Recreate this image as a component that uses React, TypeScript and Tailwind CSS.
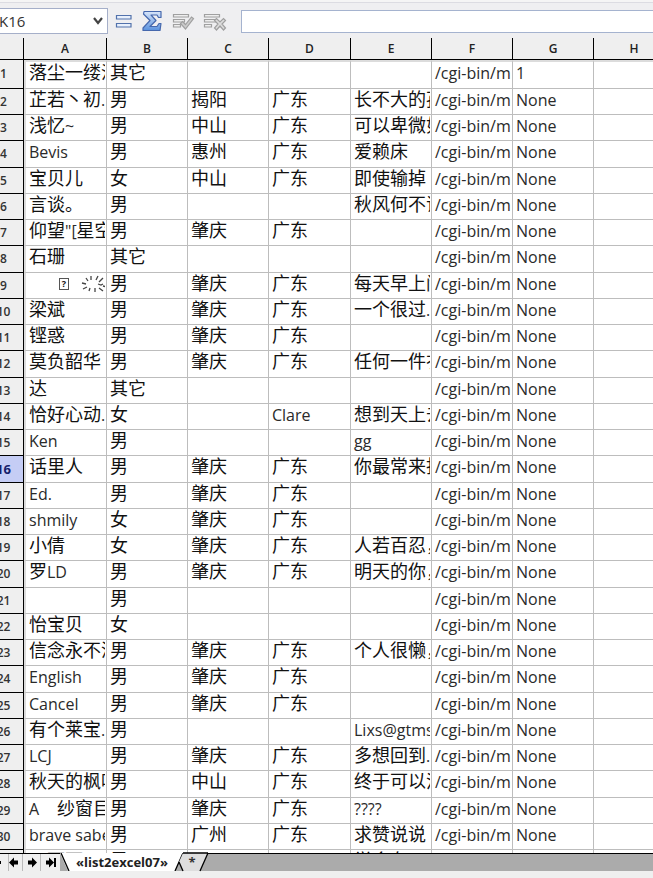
import { Fragment } from 'react'

interface Row {
  name: string
  gender?: string
  city?: string
  province?: string
  sign?: string
  avatar?: string
  flag?: string
}

const AVATAR = '/cgi-bin/m'

const columns = ['A', 'B', 'C', 'D', 'E', 'F', 'G', 'H']

const contacts: Row[] = [
  { name: '落尘一缕沙', gender: '其它', flag: '1' },
  { name: '芷若丶初.', gender: '男', city: '揭阳', province: '广东', sign: '长不大的孩' },
  { name: '浅忆~', gender: '男', city: '中山', province: '广东', sign: '可以卑微如' },
  { name: 'Bevis', gender: '男', city: '惠州', province: '广东', sign: '爱赖床' },
  { name: '宝贝儿', gender: '女', city: '中山', province: '广东', sign: '即使输掉' },
  { name: '言谈。', gender: '男', sign: '秋风何不识' },
  { name: '仰望"[星空', gender: '男', city: '肇庆', province: '广东' },
  { name: '石珊', gender: '其它' },
  { name: 'symbols', gender: '男', city: '肇庆', province: '广东', sign: '每天早上闹' },
  { name: '梁斌', gender: '男', city: '肇庆', province: '广东', sign: '一个很过.' },
  { name: '铿惑', gender: '男', city: '肇庆', province: '广东' },
  { name: '莫负韶华', gender: '男', city: '肇庆', province: '广东', sign: '任何一件衣' },
  { name: '达', gender: '其它' },
  { name: '恰好心动.', gender: '女', province: 'Clare', sign: '想到天上去' },
  { name: 'Ken', gender: '男', sign: 'gg' },
  { name: '话里人', gender: '男', city: '肇庆', province: '广东', sign: '你最常来找' },
  { name: 'Ed.', gender: '男', city: '肇庆', province: '广东' },
  { name: 'shmily', gender: '女', city: '肇庆', province: '广东' },
  { name: '小倩', gender: '女', city: '肇庆', province: '广东', sign: '人若百忍，' },
  { name: '罗LD', gender: '男', city: '肇庆', province: '广东', sign: '明天的你，' },
  { name: '', gender: '男' },
  { name: '怡宝贝', gender: '女' },
  { name: '信念永不消', gender: '男', city: '肇庆', province: '广东', sign: '个人很懒，' },
  { name: 'English', gender: '男', city: '肇庆', province: '广东' },
  { name: 'Cancel', gender: '男', city: '肇庆', province: '广东' },
  { name: '有个莱宝.', gender: '男', sign: 'Lixs@gtms' },
  { name: 'LCJ', gender: '男', city: '肇庆', province: '广东', sign: '多想回到.' },
  { name: '秋天的枫叶', gender: '男', city: '中山', province: '广东', sign: '终于可以沉' },
  { name: 'A\u3000纱窗目', gender: '男', city: '肇庆', province: '广东', sign: '????' },
  { name: 'brave saber', gender: '男', city: '广州', province: '广东', sign: '求赞说说' },
  { name: '\u3000可可', gender: '男', sign: '学会在' },
]

const selectedRow = 16

// latin runs are set smaller than the chinese ones
function CellText({ text }: { text: string }) {
  const parts = text.split(/([\x20-\x7e]+)/)
  return (
    <>
      {parts.map((part, i) =>
        i % 2 ? (
          <span key={i} className="text-base/[20px] text-[#2a2a2a]">
            {part}
          </span>
        ) : (
          <Fragment key={i}>{part}</Fragment>
        )
      )}
    </>
  )
}

function SymbolName() {
  return (
    <span className="flex h-[22px] items-center gap-3 pl-[30px]">
      <span className="flex h-3 w-[10px] shrink-0 items-center justify-center border border-[#555] text-[9px] font-bold">?</span>
      <svg className="h-5 w-[26px] shrink-0" viewBox="0 0 26 20" fill="none" stroke="#444" strokeWidth="1.3">
        <path d="M1 9l4 1M2 15l4-2M5 4l2 3M10 2v4M8 17l1-3M14 18v-4M15 6l2-4M18 8l4-4M17 10l3 1 2-1M18 14l4 3M22 12l4 1" />
      </svg>
    </span>
  )
}

function Toolbar() {
  return (
    <div className="flex h-[38px] shrink-0 items-start border-t-2 border-[#f5f5f5] bg-[#efeff1]">
      <div className="flex w-full items-start border-t border-[#dcdce2] pt-[5px]">
        <div className="relative h-[26px] w-[124px] shrink-0">
          <input
            aria-label="Name Box"
            defaultValue="K16"
            className="h-full w-full border border-[#a5afc9] bg-white pl-[14px] text-[15px] text-[#333] outline-none"
          />
          <button aria-label="Open name list" className="absolute right-[2px] top-1 flex size-4 items-center justify-center">
            <svg viewBox="0 0 16 16" className="size-4" fill="none" stroke="#444" strokeWidth="2.2">
              <path d="M4 6l4 5 4-5" />
            </svg>
          </button>
        </div>
        <button aria-label="Function" className="ml-[6px] mt-[3px]">
          <svg width="20" height="20" viewBox="0 0 20 20" fill="#e8f0fc" stroke="#5272ac" strokeWidth="1.2">
            <path d="M2.500 4.500h14.500v3.500h-14.500zM2.500 12.500h14.500v3.500h-14.500z" />
          </svg>
        </button>
        <button aria-label="Sum" className="ml-[7px] mt-[2px]">
          <svg width="24" height="22" viewBox="0 0 24 22">
            <defs>
              <linearGradient id="sum" x1="0" y1="0" x2="0" y2="1">
                <stop offset="0" stopColor="#d8e6fa" />
                <stop offset="1" stopColor="#5a92de" />
              </linearGradient>
            </defs>
            <path
              d="M3 1.500h17v6h-2.500l-1.500-2.500h-6l5 5.500-6 6h7l2-3h2l-1 7h-17v-2.500l7-7.500-6.500-6.500z"
              fill="url(#sum)"
              stroke="#4668ad"
              strokeWidth="1.2"
              strokeLinejoin="round"
            />
          </svg>
        </button>
        <button aria-label="Accept" className="ml-[7px] mt-[4px]">
          <svg width="24" height="20" viewBox="0 0 24 20" fill="#eee" stroke="#a0a0a0" strokeWidth="1.200">
            <path d="M1.500 2.500h15v2.500h-15zM1.500 7.500h11v2.500h-11zM1.500 12.500h7v2.500h-7z" />
            <path d="M8.500 11.500l2-2 3 3 6-7.500 2 1.500-8 10.500z" fill="#ccc" />
          </svg>
        </button>
        <button aria-label="Cancel" className="ml-[7px] mt-[4px]">
          <svg width="24" height="20" viewBox="0 0 24 20" fill="#eee" stroke="#a0a0a0" strokeWidth="1.200">
            <path d="M1.500 2.500h15v2.500h-15zM1.500 7.500h11v2.500h-11zM1.500 12.500h7v2.500h-7z" />
            <path d="M11.500 8.500l2-2 3.500 3.500 3.500-3.500 2 2-3.500 3.500 3.500 4-2 2-3.500-4-3.500 4-2-2 3.500-4z" fill="#ddd" />
          </svg>
        </button>
        <input
          aria-label="Input line"
          className="ml-[14px] mt-[2px] h-[23px] min-w-0 flex-1 border border-r-0 border-[#a5b3cf] bg-white px-1 outline-none"
        />
      </div>
    </div>
  )
}

function Sheet() {
  return (
    <div className="min-h-0 flex-1 overflow-hidden bg-white">
      <table className="w-full min-w-[691px] table-fixed border-separate border-spacing-0">
        <colgroup>
          <col className="w-[40px]" />
          <col className="w-[83px]" />
          <col className="w-[81px]" />
          <col className="w-[81px]" />
          <col className="w-[82px]" />
          <col className="w-[81px]" />
          <col className="w-[81px]" />
          <col className="w-[81px]" />
          <col />
        </colgroup>
        <thead>
          <tr className="h-[22px] bg-[#efefef] text-xs/[20px] text-[#222]">
            <th className="border-b border-r border-black" />
            {columns.map(c => (
              <th key={c} scope="col" className="border-b border-r border-black p-0 font-semibold">
                {c}
              </th>
            ))}
          </tr>
        </thead>
        <tbody>
          {contacts.map((row, i) => {
            const n = i + 1
            const cells = [row.name, row.gender, row.city, row.province, row.sign, row.avatar ?? AVATAR, row.flag ?? 'None']
            return (
              <tr key={n} className="group h-[26px] first:h-[29px] nth-[4n]:h-[27px]">
                <th
                  scope="row"
                  className={
                    n === selectedRow
                      ? 'border-b border-r border-black bg-[#c5cdf5] p-0 text-[13px]/[22px] font-bold text-[#16206a]'
                      : 'border-b border-r border-black bg-[#efefef] p-0 text-xs/[22px] font-semibold text-[#333]'
                  }
                >
                  {n}
                </th>
                {columns.map((c, j) => (
                  <td
                    key={c}
                    className="border-b border-r border-[#bdbdbd] p-0 align-top first-of-type:border-l-2 first-of-type:border-l-[#dcdcdc] group-first:border-t-2 group-first:border-t-[#dcdcdc]"
                  >
                    <div className="mr-px h-[25px] overflow-hidden whitespace-nowrap pl-[3px] text-lg/[20px] text-[#111]">
                      {row.name === 'symbols' && j === 0 ? <SymbolName /> : <CellText text={cells[j] ?? ''} />}
                    </div>
                  </td>
                ))}
              </tr>
            )
          })}
        </tbody>
      </table>
    </div>
  )
}

function SheetTabs() {
  return (
    <div className="h-[25px] shrink-0 bg-[#efefef]">
      <div className="flex h-[18px] bg-[#ababab]">
        <div className="flex border-t border-black bg-[#efefef]">
          <button aria-label="First sheet" className="w-[25px] border-r border-[#bbb]">
            <svg width="17" height="17" viewBox="0 0 17 17" className="block">
              <path d="M2 4h2v9H2zM5 8.500l5-4.500v3h7v3h-7v3z" />
            </svg>
          </button>
          <button aria-label="Previous sheet" className="w-[14px] border-r border-[#bbb]">
            <svg width="11" height="17" viewBox="0 0 11 17" className="block">
              <path d="M0 8.500l5-5v3h4v4H5v3z" />
            </svg>
          </button>
          <button aria-label="Next sheet" className="w-[18px] border-r border-[#bbb] pl-1">
            <svg width="11" height="17" viewBox="0 0 11 17" className="block">
              <path d="M10 8.500l-5-5v3H1v4h4v3z" />
            </svg>
          </button>
          <button aria-label="Last sheet" className="w-[19px] pl-1">
            <svg width="13" height="17" viewBox="0 0 13 17" className="block">
              <path d="M9 8.500l-5-5v3H1v4h3v3zM9 4h2v9H9z" />
            </svg>
          </button>
        </div>
        <div className="relative h-[18px] w-[124px]">
          <svg className="absolute inset-0" width="124" height="18" viewBox="0 0 124 18">
            <path d="M0 0l8 18h107l8-18z" fill="#fff" />
            <path d="M1 0l8 18M115 18l8-18" stroke="#000" strokeWidth="1.300" fill="none" />
          </svg>
          <button className="relative block w-full text-center text-[13px]/[18px] font-bold text-[#222]">«list2excel07»</button>
        </div>
        <div className="relative h-[18px] w-[24px]">
          <svg className="absolute inset-0 overflow-visible" width="24" height="18" viewBox="0 0 24 18">
            <path d="M-1 0l-4 9 4 9h17l8-18z" fill="#dedede" />
            <path d="M-1 0h25M-5 9l4 9M16 18l8-18" stroke="#000" strokeWidth="1.300" fill="none" />
          </svg>
          <button aria-label="Add sheet" className="relative block w-4 text-center text-[13px]/[18px] font-bold text-[#333]">
            *
          </button>
        </div>
        <div className="flex-1 border-t border-black" />
      </div>
    </div>
  )
}

export default function App() {
  return (
    <div className="h-screen overflow-hidden bg-[#efefef] font-['Open_Sans','Noto_Sans_CJK_SC',sans-serif]">
      {/* the left edge of the window sits slightly off screen */}
      <div className="-ml-4 flex h-full flex-col">
        <Toolbar />
        <Sheet />
        <SheetTabs />
      </div>
    </div>
  )
}
